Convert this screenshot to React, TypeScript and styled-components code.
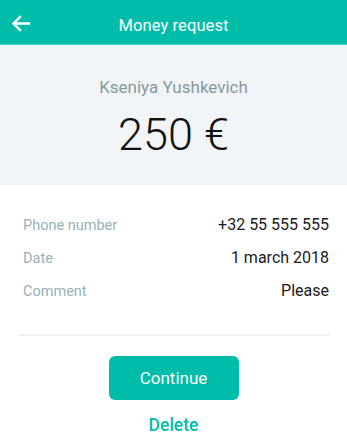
import styled, { createGlobalStyle } from 'styled-components'

const GlobalStyle = createGlobalStyle`
  html, body {
    margin: 0;
    padding: 0;
    background: #ffffff;
    font-family: Roboto, 'Liberation Sans', sans-serif;
  }
`

const Screen = styled.div`
  width: 347px;
  height: 447px;
  display: flex;
  flex-direction: column;
  overflow: hidden;
`

const Header = styled.header`
  height: 44px;
  background: #00bdaa;
  border-bottom: 1px solid #3fd3c3;
  display: flex;
  align-items: center;
  justify-content: center;
  position: relative;
  color: #ffffff;
`

const BackButton = styled.button`
  all: unset;
  position: absolute;
  left: 11px;
  top: 15px;
  width: 20px;
  height: 17px;
  display: flex;
  cursor: pointer;
`

const Title = styled.h1`
  margin: 0;
  padding-top: 6px;
  font-size: 16.5px;
  font-weight: 400;
  letter-spacing: 0.1px;
`

const Summary = styled.section`
  height: 140px;
  background: #f1f5f8;
  display: flex;
  flex-direction: column;
  align-items: center;
  padding-top: 32px;
  box-sizing: border-box;
`

const Name = styled.div`
  font-size: 17px;
  color: #86999c;
  line-height: 20px;
`

const Amount = styled.div`
  margin-top: 12px;
  font-size: 45px;
  font-weight: 300;
  color: #111111;
  line-height: 52px;
`

const Details = styled.div`
  padding: 30px 18px 0 23px;
  display: flex;
  flex-direction: column;
  gap: 13px;
`

const Row = styled.div`
  display: flex;
  justify-content: space-between;
  align-items: baseline;
  height: 20px;
`

const Label = styled.span`
  font-size: 14.5px;
  color: #97b2b6;
`

const Value = styled.span`
  font-size: 16px;
  color: #1a1a1a;
`

const Divider = styled.hr`
  margin: 33px 17px 0 19px;
  border: none;
  height: 2px;
  background: #f0f0f0;
`

const Actions = styled.div`
  display: flex;
  flex-direction: column;
  align-items: center;
  padding-top: 20px;
`

const PrimaryButton = styled.button`
  width: 130px;
  height: 44px;
  border: none;
  border-radius: 6px;
  background: #00bdaa;
  color: #ffffff;
  font-family: inherit;
  font-size: 17px;
  cursor: pointer;
`

const LinkButton = styled.button`
  margin-top: 15px;
  border: none;
  background: none;
  padding: 0;
  color: #00bdaa;
  font-family: inherit;
  font-size: 17.5px;
  font-weight: 500;
  cursor: pointer;
`

const details = [
  { label: 'Phone number', value: '+32 55 555 555' },
  { label: 'Date', value: '1 march 2018' },
  { label: 'Comment', value: 'Please' },
]

const App = () => {
  return (
    <>
      <GlobalStyle />
      <Screen>
        <Header>
          <BackButton aria-label="Back">
            <svg width="20" height="17" viewBox="0 0 20 17" fill="none">
              <path d="M18 8.5H3M9 2L2.5 8.5L9 15" stroke="#fff" strokeWidth="2.4" strokeLinecap="square" />
            </svg>
          </BackButton>
          <Title>Money request</Title>
        </Header>
        <Summary>
          <Name>Kseniya Yushkevich</Name>
          <Amount>250 €</Amount>
        </Summary>
        <Details>
          {details.map((d) => (
            <Row key={d.label}>
              <Label>{d.label}</Label>
              <Value>{d.value}</Value>
            </Row>
          ))}
        </Details>
        <Divider />
        <Actions>
          <PrimaryButton>Continue</PrimaryButton>
          <LinkButton>Delete</LinkButton>
        </Actions>
      </Screen>
    </>
  )
}

export default App
